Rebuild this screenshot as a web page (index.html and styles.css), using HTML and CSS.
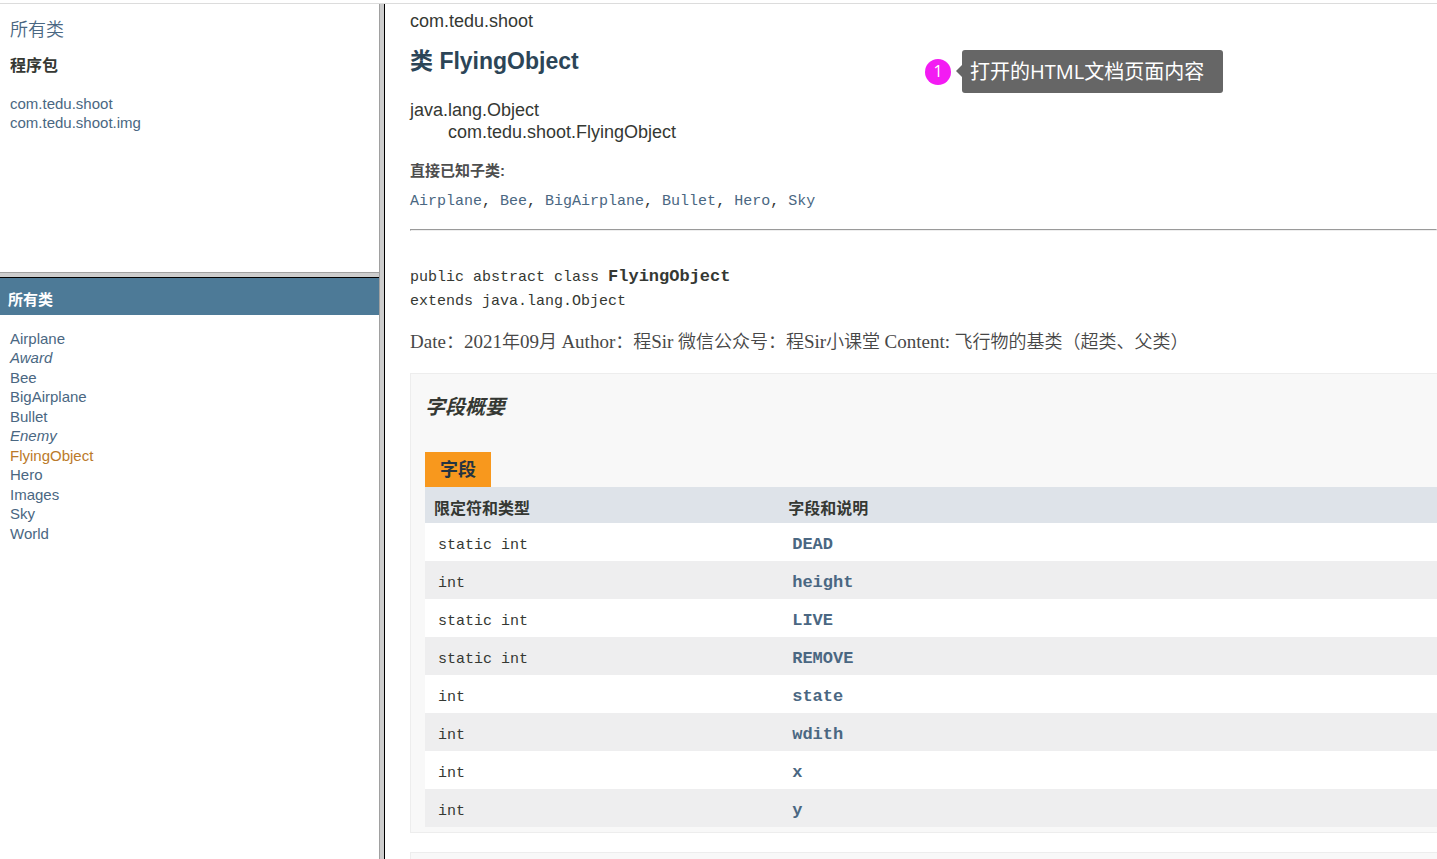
FILE: index.html
```html
<!DOCTYPE html>
<html lang="zh-CN">
<head>
<meta charset="utf-8">
<title>FlyingObject</title>
<link rel="stylesheet" href="styles.css">
</head>
<body>
<div class="frames">
  <div class="sidebar">
    <nav class="packages">
      <a class="all-classes" href="#">所有类</a>
      <h2 class="packages-title">程序包</h2>
      <ul class="list">
        <li><a href="#">com.tedu.shoot</a></li>
        <li><a href="#">com.tedu.shoot.img</a></li>
      </ul>
    </nav>
    <nav class="classes">
      <h1 class="bar">所有类</h1>
      <ul class="list">
        <li><a href="#">Airplane</a></li>
        <li><a class="interface" href="#">Award</a></li>
        <li><a href="#">Bee</a></li>
        <li><a href="#">BigAirplane</a></li>
        <li><a href="#">Bullet</a></li>
        <li><a class="interface" href="#">Enemy</a></li>
        <li><a class="active" href="#">FlyingObject</a></li>
        <li><a href="#">Hero</a></li>
        <li><a href="#">Images</a></li>
        <li><a href="#">Sky</a></li>
        <li><a href="#">World</a></li>
      </ul>
    </nav>
  </div>
  <main class="content">
    <div class="package-name">com.tedu.shoot</div>
    <h2 class="class-title">类 FlyingObject</h2>
    <ul class="inheritance">
      <li>java.lang.Object</li>
      <li class="child">com.tedu.shoot.FlyingObject</li>
    </ul>
    <dl class="subclasses">
      <dt>直接已知子类:</dt>
      <dd><a href="#">Airplane</a>, <a href="#">Bee</a>, <a href="#">BigAirplane</a>, <a href="#">Bullet</a>, <a href="#">Hero</a>, <a href="#">Sky</a></dd>
    </dl>
    <hr class="rule">
    <pre class="signature">public abstract class <b>FlyingObject</b>
extends java.lang.Object</pre>
    <p class="description"><span class="latin">Date</span>：<span class="latin">2021</span>年<span class="latin">09</span>月 <span class="latin">Author</span>：程<span class="latin">Sir</span> 微信公众号：程<span class="latin">Sir</span>小课堂 <span class="latin">Content:</span> 飞行物的基类（超类、父类）</p>
    <section class="summary">
      <h3 class="summary-title">字段概要</h3>
      <table class="fields">
        <caption><span class="tab">字段</span></caption>
        <thead>
          <tr><th class="type" scope="col">限定符和类型</th><th scope="col">字段和说明</th></tr>
        </thead>
        <tbody>
          <tr><td>static int</td><td><a href="#">DEAD</a></td></tr>
          <tr><td>int</td><td><a href="#">height</a></td></tr>
          <tr><td>static int</td><td><a href="#">LIVE</a></td></tr>
          <tr><td>static int</td><td><a href="#">REMOVE</a></td></tr>
          <tr><td>int</td><td><a href="#">state</a></td></tr>
          <tr><td>int</td><td><a href="#">wdith</a></td></tr>
          <tr><td>int</td><td><a href="#">x</a></td></tr>
          <tr><td>int</td><td><a href="#">y</a></td></tr>
        </tbody>
      </table>
    </section>
    <section class="summary"></section>
    <div class="note">
      <span class="note-number">1</span>
      <span class="note-text">打开的HTML文档页面内容</span>
    </div>
  </main>
</div>
</body>
</html>
```
FILE: styles.css
```css
* { box-sizing: border-box; }
body {
  margin: 0;
  padding-top: 3px;
  height: 100vh;
  overflow: hidden;
  background: #fff;
  color: #353833;
  font-family: "Liberation Sans", "Noto Sans CJK SC", sans-serif;
}
a { color: #4a6782; text-decoration: none; }
h1, h2, h3, ul, dl, dd, p, pre { margin: 0; padding: 0; }
ul { list-style: none; }
.frames {
  display: grid;
  grid-template-columns: 385fr 1052fr;
  height: 100%;
  border-top: 1px solid #dcdcdc;
}
.sidebar {
  display: grid;
  grid-template-rows: 274fr 581fr;
  min-height: 0;
  padding-right: 5px;
  border-right: 1px solid #000;
  box-shadow: inset -4px 0 #cdcdcd, inset -5px 0 #a0a0a0;
}
.sidebar nav { overflow: hidden; }
.packages {
  padding: 13px 10px;
  border-bottom: 1px solid #000;
  box-shadow: inset 0 -4px #cdcdcd, inset 0 -5px #a0a0a0;
}
.all-classes { display: block; font-size: 18px; line-height: 26px; font-weight: 350; }
.packages-title { margin: 11px 0 16px; font-size: 16px; line-height: 24px; }
.list { font-size: 15px; line-height: 19px; }
.bar {
  margin-bottom: 14px;
  padding: 11px 8px 5px;
  background: #4d7a97;
  color: #fff;
  font-size: 15px;
  line-height: 21px;
}
.classes .list { padding-left: 10px; }
.classes li:nth-child(even) { padding-bottom: 1px; }
.interface { font-style: italic; }
.active { color: #bb7a2a; }
.content {
  position: relative;
  padding-left: 25px;
  overflow: hidden;
  min-height: 0;
}
.package-name { margin-top: 6px; font-size: 18px; line-height: 22px; }
.class-title { margin: 14px 0 23px; color: #2c4557; font-size: 23px; line-height: 30px; }
.inheritance { font-size: 18px; line-height: 22px; }
.child { padding-left: 38px; }
.subclasses { margin-top: 17px; }
.subclasses dt { color: #4e4e4e; font-size: 15px; font-weight: bold; line-height: 22px; }
.subclasses dd { margin-top: 8px; font: 15px/24px "Liberation Mono", monospace; }
.rule { margin: 15px 0 35px; }
.signature { font: 15px/24px "Liberation Mono", monospace; }
.signature b { font-size: 17px; line-height: 20px; }
.description {
  margin: 15px 0 18px;
  color: #474747;
  font: 350 18px/26px "Liberation Serif", "Noto Sans CJK SC", serif;
}
.latin { font-size: 19px; line-height: 20px; }
.summary {
  min-height: 40px;
  margin-bottom: 19px;
  padding: 0 0 5px 14px;
  border: 1px solid #ededed;
  border-right: 0;
  background: #f8f8f8;
}
.summary-title { padding: 18px 0 30px; font-size: 20px; line-height: 30px; font-style: italic; }
.fields {
  width: 100%;
  table-layout: fixed;
  border-collapse: collapse;
  background: #fff;
}
.fields caption { text-align: left; background: #f8f8f8; }
.tab {
  display: inline-block;
  vertical-align: top;
  padding: 1px 15px 0;
  background: #f8981d;
  color: #253441;
  font-size: 18px;
  font-weight: bold;
  line-height: 34px;
}
.fields th {
  height: 36px;
  padding: 7px 9px 0;
  background: #dee3e9;
  text-align: left;
  font-size: 16px;
  line-height: 24px;
}
.type { width: 35%; }
.fields td {
  height: 38px;
  padding: 8px 13px 0;
  font: 15px/24px "Liberation Mono", monospace;
}
.fields td a { font-size: 17px; font-weight: bold; line-height: 20px; }
.fields tbody tr:nth-child(even) { background: #eeeeef; }
.note {
  position: absolute;
  top: 46px;
  left: 540px;
  display: flex;
  align-items: center;
  gap: 11px;
}
.note-number {
  width: 26px;
  padding-bottom: 2px;
  border-radius: 50%;
  background: #f31bf3;
  color: #fff;
  text-align: center;
  font: 16px/24px "Open Sans", sans-serif;
}
.note-text {
  position: relative;
  padding: 0 19px 0 8px;
  border-radius: 3px;
  background: #666;
  color: #fff;
  font: 20px/43px "Open Sans", "Noto Sans CJK SC", sans-serif;
}
.note-text::before {
  content: "";
  position: absolute;
  top: 15px;
  left: -6px;
  border: 6px solid transparent;
  border-left: 0;
  border-right-color: #666;
}
```
